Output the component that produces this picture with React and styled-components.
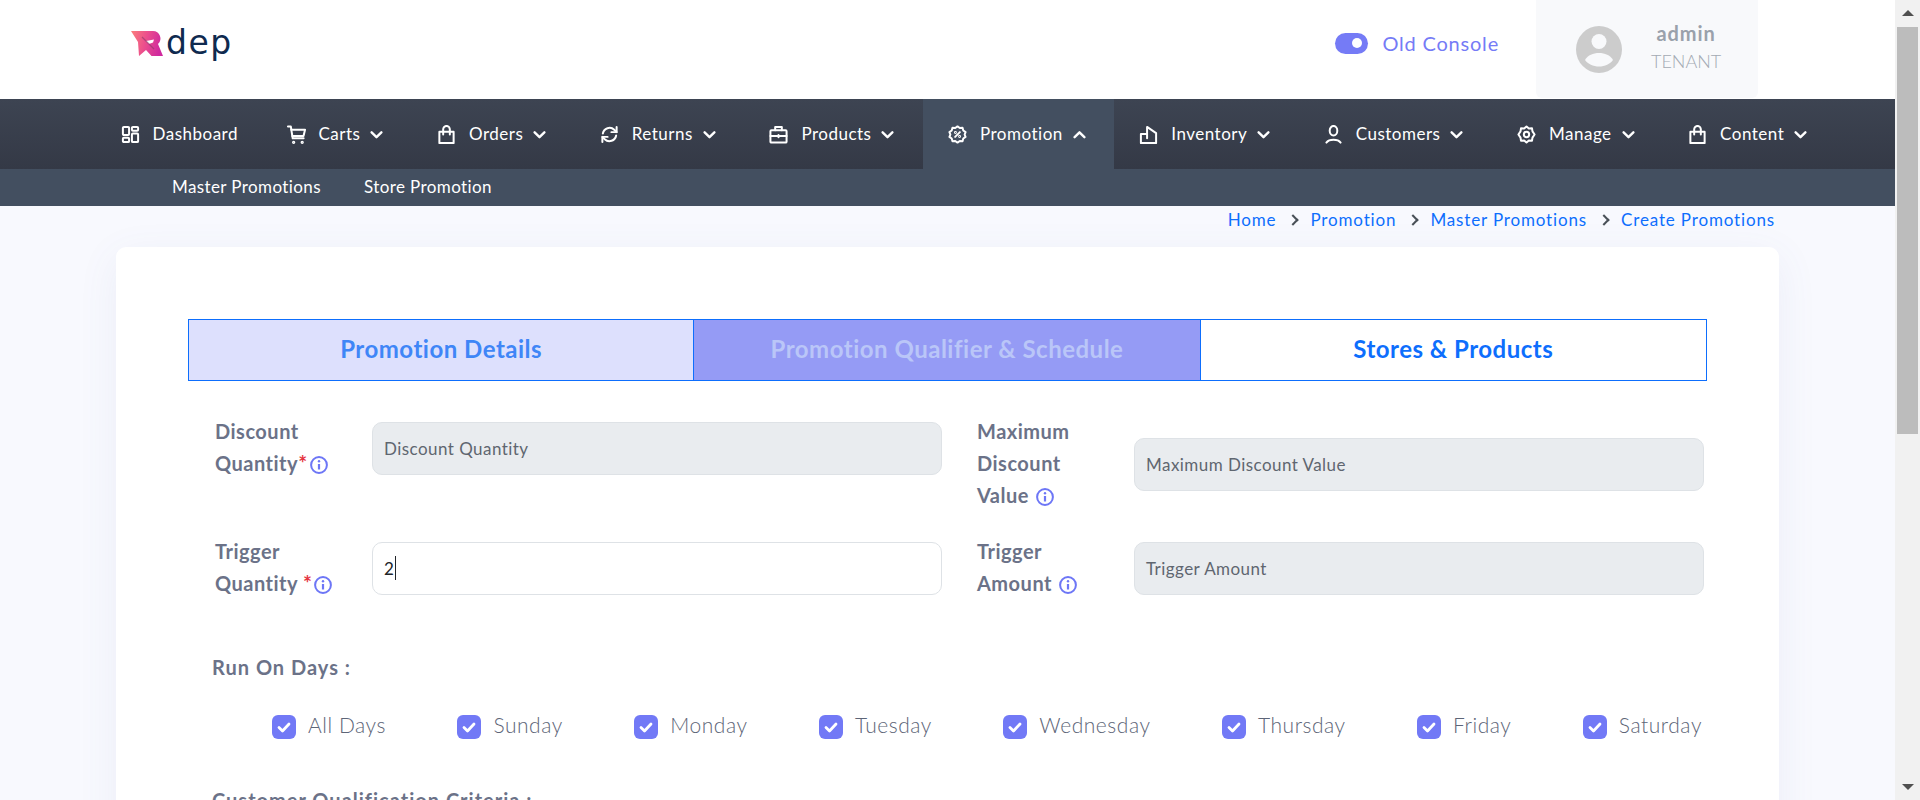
import React from 'react'
import styled, { createGlobalStyle } from 'styled-components'

const font = `Lato, "Noto Sans", sans-serif`

const Icon = ({ children }) => (
  <NavIcon viewBox="0 0 20 20" fill="none" stroke="currentColor" strokeWidth="2.1" strokeLinecap="round" strokeLinejoin="round">
    {children}
  </NavIcon>
)

const bag = (
  <>
    <path d="M2.500 7h15v12h-15z" />
    <path d="M6.500 10V4.500a3.500 3.500 0 0 1 7 0V10" />
  </>
)

const navItems = [
  {
    label: 'Dashboard',
    icon: (
      <>
        <rect x="2" y="2" width="6.500" height="8.500" rx="1" />
        <rect x="11.500" y="2" width="6.500" height="4" rx="1" />
        <rect x="2" y="13.500" width="6.500" height="4.500" rx="1" />
        <rect x="11.500" y="9" width="6.500" height="9" rx="1" />
      </>
    ),
    plain: true,
  },
  {
    label: 'Carts',
    icon: (
      <>
        <path d="M1 1.500h3l2 12.500h11.500" />
        <path d="M4.500 5H19l-1.600 6.500H5.600" />
        <circle cx="7" cy="18.200" r="0.700" />
        <circle cx="16" cy="18.200" r="0.700" />
      </>
    ),
  },
  { label: 'Orders', icon: bag },
  {
    label: 'Returns',
    icon: (
      <>
        <path d="M3 9a7.200 7.200 0 0 1 12-4l2.500 2.500" />
        <path d="M17.500 2v5.500H12" />
        <path d="M17 11a7.200 7.200 0 0 1-12 4l-2.500-2.500" />
        <path d="M2.500 18v-5.500H8" />
      </>
    ),
  },
  {
    label: 'Products',
    icon: (
      <>
        <rect x="1.500" y="5.500" width="17" height="13" rx="1" />
        <path d="M6.500 5.500V2h7v3.500" />
        <path d="M1.500 11.500h17" />
        <path d="M10 10.500v2.500" />
      </>
    ),
  },
  {
    label: 'Promotion',
    open: true,
    icon: (
      <>
        <path d="M10 1.500l2.400 1.700 2.900-.2.800 2.800 2.400 1.700-1 2.500 1 2.500-2.400 1.700-.8 2.800-2.900-.2-2.400 1.700-2.400-1.700-2.900.2-.8-2.800-2.400-1.700 1-2.500-1-2.500 2.400-1.700.8-2.800 2.900.2z" />
        <path d="M12.500 7.500l-5 5" />
        <circle cx="7.800" cy="7.800" r="0.500" />
        <circle cx="12.200" cy="12.200" r="0.500" />
      </>
    ),
  },
  {
    label: 'Inventory',
    icon: (
      <>
        <path d="M2 9.500h6.500V2L18 8.500V19H2z" />
        <path d="M8.500 9.500V14" />
      </>
    ),
  },
  {
    label: 'Customers',
    icon: (
      <>
        <ellipse cx="10" cy="6" rx="4" ry="5" />
        <path d="M2.500 18.500c1.500-2 4-3 7.500-3s6 1 7.500 3" />
      </>
    ),
  },
  {
    label: 'Manage',
    icon: (
      <>
        <path d="M10 1.500l2.500 2.200 3.300-.2.500 3.200L18.500 10l-2.200 3.300-.5 3.200-3.300-.2L10 18.500l-2.500-2.200-3.300.2-.5-3.200L1.500 10l2.200-3.300.5-3.200 3.300.2z" />
        <circle cx="10" cy="10" r="2.800" />
      </>
    ),
  },
  { label: 'Content', icon: bag },
]

const days = ['All Days', 'Sunday', 'Monday', 'Tuesday', 'Wednesday', 'Thursday', 'Friday', 'Saturday']

const Chevron = ({ up }) => (
  <ChevronIcon viewBox="0 0 12 12" fill="none" stroke="currentColor" strokeWidth="2.200" strokeLinecap="round" strokeLinejoin="round">
    <path d={up ? 'M1.500 8.500L6 4l4.500 4.500' : 'M1.500 4L6 8.500 10.500 4'} />
  </ChevronIcon>
)

const Info = () => (
  <InfoIcon viewBox="0 0 18 18" fill="none">
    <circle cx="9" cy="9" r="7.900" stroke="#6d76f6" strokeWidth="2" />
    <circle cx="9" cy="5.300" r="1.200" fill="#6d76f6" />
    <path d="M9 8v5.500" stroke="#6d76f6" strokeWidth="2.200" />
  </InfoIcon>
)

const Logo = () => (
  <LogoBox>
    <svg width="33" height="25" viewBox="0 0 33 25">
      <defs>
        <linearGradient id="logoGrad" x1="0" y1="0" x2="1" y2="0.200">
          <stop offset="0" stopColor="#fb7f7c" />
          <stop offset="0.500" stopColor="#ec4f8c" />
          <stop offset="1" stopColor="#d02a9e" />
        </linearGradient>
      </defs>
      <path d="M1 0H23a7.500 7.500 0 0 1 5 13L33 25H21.500L16 19 9 25 8 11z" fill="url(#logoGrad)" />
      <path d="M16 10l8-1.500-1 3-4 1.500z" fill="#fff" />
      <path d="M12 6l12 12" stroke="#8a3a6a" strokeWidth="1.200" opacity="0.600" />
    </svg>
    <LogoText>dep</LogoText>
  </LogoBox>
)

const Field = ({ label, required, filled, placeholder }) => (
  <FieldCol>
    <FieldLabel>
      {label}
      {required && <Star>*</Star>}
      <Info />
    </FieldLabel>
    {filled ? (
      <FilledInput>
        2<Caret />
      </FilledInput>
    ) : (
      <DisabledInput>{placeholder}</DisabledInput>
    )}
  </FieldCol>
)

const App = () => {
  return (
    <Page>
      <GlobalStyle />
      <Header>
        <Logo />
        <HeaderRight>
          <ToggleWrap>
            <Toggle />
            <ToggleLabel>Old Console</ToggleLabel>
          </ToggleWrap>
          <Profile>
            <Avatar viewBox="0 0 46 47">
              <ellipse cx="23" cy="23.500" rx="23" ry="23.500" fill="#cccccc" />
              <circle cx="23" cy="15.500" r="7.500" fill="#f8f9fb" />
              <path d="M9 34c3-5 8-7 14-7s11 2 14 7c-3 4-8 6.500-14 6.500S12 38 9 34z" fill="#f8f9fb" />
            </Avatar>
            <ProfileText>
              <ProfileName>admin</ProfileName>
              <ProfileRole>TENANT</ProfileRole>
            </ProfileText>
          </Profile>
        </HeaderRight>
      </Header>

      <Nav>
        {navItems.map((item) => (
          <NavItem key={item.label} $open={item.open}>
            <Icon>{item.icon}</Icon>
            <NavLabel>{item.label}</NavLabel>
            {!item.plain && <Chevron up={item.open} />}
          </NavItem>
        ))}
      </Nav>
      <SubNav>
        <SubLink>Master Promotions</SubLink>
        <SubLink>Store Promotion</SubLink>
      </SubNav>

      <Main>
        <Breadcrumb>
          <Crumb>Home</Crumb>
          <CrumbSep />
          <Crumb>Promotion</Crumb>
          <CrumbSep />
          <Crumb>Master Promotions</Crumb>
          <CrumbSep />
          <Crumb>Create Promotions</Crumb>
        </Breadcrumb>

        <Card>
          <Tabs>
            <Tab $state="done">Promotion Details</Tab>
            <Tab $state="current">Promotion Qualifier &amp; Schedule</Tab>
            <Tab>Stores &amp; Products</Tab>
          </Tabs>

          <FormGrid>
            <Field label={<>Discount<br />Quantity</>} required placeholder="Discount Quantity" />
            <Field label={<>Maximum<br />Discount<br />Value </>} placeholder="Maximum Discount Value" />
            <Field label={<>Trigger<br />Quantity </>} required filled />
            <Field label={<>Trigger<br />Amount </>} placeholder="Trigger Amount" />
          </FormGrid>

          <SectionTitle>Run On Days :</SectionTitle>
          <DaysRow>
            {days.map((day) => (
              <Day key={day}>
                <CheckBox viewBox="0 0 24 24">
                  <rect width="24" height="24" rx="6" fill="#7279f6" />
                  <path d="M7 12.500l3.500 3.500L17 9" fill="none" stroke="#fff" strokeWidth="2.800" strokeLinecap="round" strokeLinejoin="round" />
                </CheckBox>
                <DayText>{day}</DayText>
              </Day>
            ))}
          </DaysRow>
          <CriteriaTitle>Customer Qualification Criteria :</CriteriaTitle>
        </Card>
      </Main>

      <Scrollbar>
        <ScrollArrow />
        <ScrollThumb />
        <ScrollArrow $down />
      </Scrollbar>
    </Page>
  )
}

export default App

const GlobalStyle = createGlobalStyle`
  body {
    margin: 0;
    background: #f8f9fe;
    font-family: ${font};
  }
  * { box-sizing: border-box; }
`

const Page = styled.div`
  margin-right: 25px;
`
const Scrollbar = styled.div`
  position: fixed;
  top: 0;
  right: 0;
  bottom: 0;
  width: 25px;
  background: #f1f1f1;
  display: flex;
  flex-direction: column;
  justify-content: space-between;
  align-items: center;
  padding: 10px 0;
`
const ScrollArrow = styled.span`
  width: 0;
  height: 0;
  border-left: 6px solid transparent;
  border-right: 6px solid transparent;
  border-bottom: ${(p) => (p.$down ? '0' : '6px solid #505050')};
  border-top: ${(p) => (p.$down ? '6px solid #505050' : '0')};
`
const ScrollThumb = styled.span`
  position: absolute;
  top: 27px;
  left: 2px;
  width: 21px;
  height: 407px;
  background: #bcbcbc;
`
const Header = styled.header`
  height: 99px;
  background: #fff;
  display: flex;
  justify-content: space-between;
  padding: 0 137px 0 130px;
`
const LogoBox = styled.div`
  display: flex;
  align-items: flex-start;
  gap: 3px;
  padding-top: 31px;
`
const LogoText = styled.span`
  font-family: "DejaVu Sans", sans-serif;
  font-size: 33px;
  line-height: 33px;
  margin-top: -5px;
  color: #0f2a4f;
  letter-spacing: 1.5px;
`
const HeaderRight = styled.div`
  display: flex;
  align-items: flex-start;
  gap: 37px;
`
const ToggleWrap = styled.div`
  display: flex;
  align-items: center;
  gap: 14px;
  height: 86px;
`
const Toggle = styled.span`
  position: relative;
  width: 33px;
  height: 21px;
  border-radius: 11px;
  background: #757bf6;
  &::after {
    content: '';
    position: absolute;
    right: 6px;
    top: 5.500px;
    width: 10px;
    height: 10px;
    border-radius: 50%;
    background: #fff;
  }
`
const ToggleLabel = styled.span`
  font-size: 20px;
  letter-spacing: 0.8px;
  color: #757bf6;
`
const Profile = styled.div`
  width: 222px;
  height: 98px;
  background: #f8f9fb;
  border-radius: 0 0 6px 6px;
  display: flex;
  align-items: center;
  padding-left: 40px;
  gap: 29px;
`
const Avatar = styled.svg`
  width: 46px;
  height: 47px;
`
const ProfileText = styled.div`
  display: flex;
  flex-direction: column;
  align-items: center;
  gap: 5px;
  margin-bottom: 3px;
`
const ProfileName = styled.span`
  font-size: 20px;
  font-weight: 700;
  letter-spacing: 0.9px;
  color: #9aa1ab;
  line-height: 23px;
`
const ProfileRole = styled.span`
  font-size: 18px;
  font-weight: 300;
  color: #a3aab3;
  line-height: 23px;
`
const Nav = styled.nav`
  height: 70px;
  padding-left: 95.500px;
  display: flex;
  background: linear-gradient(#3d4452, #343946);
`
const NavItem = styled.div`
  height: 70px;
  padding: 0 23.500px 0 25px;
  display: flex;
  align-items: center;
  color: #fff;
  font-size: 17px;
  letter-spacing: 0.5px;
  background: ${(p) => (p.$open ? '#434f60' : 'transparent')};
`
const NavLabel = styled.span`
  margin: -1px 0 1px;
`
const NavIcon = styled.svg`
  width: 19px;
  height: 19px;
  margin-right: 13px;
  flex-shrink: 0;
`
const ChevronIcon = styled.svg`
  width: 13px;
  height: 13px;
  margin: 0 5px 0 10px;
`
const SubNav = styled.div`
  height: 37px;
  background: #434f60;
  padding-left: 172px;
  display: flex;
  align-items: center;
  gap: 43px;
`
const SubLink = styled.a`
  color: #fff;
  font-size: 17px;
  letter-spacing: 0.4px;
  margin: -1px 0 1px;
`
const Main = styled.main`
  padding: 0 116px 40px;
`
const Breadcrumb = styled.div`
  height: 41px;
  display: flex;
  align-items: flex-start;
  justify-content: flex-end;
  padding: 3px 4px 0 0;
  gap: 13px;
`
const Crumb = styled.a`
  color: #0d6efd;
  font-size: 17px;
  letter-spacing: 0.85px;
  line-height: 22px;
`
const CrumbSep = styled.span`
  width: 8px;
  height: 8px;
  margin-top: 7px;
  border-top: 2px solid #495057;
  border-right: 2px solid #495057;
  transform: rotate(45deg);
`
const Card = styled.section`
  background: #fff;
  border-radius: 10px;
  box-shadow: 0 10px 40px rgba(90, 100, 160, 0.08);
  padding: 72px 72px 0;
  min-height: 1165px;
`
const Tabs = styled.div`
  display: grid;
  grid-template-columns: repeat(3, 1fr);
  height: 62px;
`
const tabBg = { done: '#dde0fd', current: '#959bf5' }
const tabColor = { done: '#3f86f7', current: '#bac6f8' }
const Tab = styled.div`
  display: flex;
  align-items: center;
  justify-content: center;
  padding-bottom: 3px;
  border: 1px solid #0d6efd;
  & + & {
    border-left: 0;
  }
  background: ${(p) => tabBg[p.$state] || '#fff'};
  color: ${(p) => tabColor[p.$state] || '#0d6efd'};
  font-size: 24px;
  letter-spacing: 0.5px;
  font-weight: 700;
`
const FormGrid = styled.div`
  display: grid;
  grid-template-columns: 762px 727px;
  align-items: start;
  row-gap: 24px;
  margin-top: 35px;
  padding-left: 27px;
`
const FieldCol = styled.div`
  display: flex;
  align-items: center;
`
const FieldLabel = styled.div`
  width: 157px;
  flex-shrink: 0;
  margin: -1px 0 1px;
  font-size: 20px;
  letter-spacing: 0.5px;
  font-weight: 700;
  line-height: 32px;
  color: #6b7288;
`
const Star = styled.span`
  color: #e5343f;
  font-size: 21px;
  line-height: 0;
`
const InfoIcon = styled.svg`
  width: 18px;
  height: 18px;
  margin-left: 2px;
  vertical-align: -3px;
`
const inputBase = `
  width: 570px;
  height: 53px;
  border-radius: 10px;
  border: 1px solid #dee2e6;
  display: flex;
  align-items: center;
  padding: 0 11px;
  font-size: 17px;
  letter-spacing: 0.45px;
`
const DisabledInput = styled.div`
  ${inputBase}
  background: #e9ecef;
  color: #5f6670;
`
const FilledInput = styled.div`
  ${inputBase}
  background: #fff;
  color: #212529;
`
const Caret = styled.span`
  width: 1px;
  height: 24px;
  background: #212529;
  margin-left: 1px;
`
const SectionTitle = styled.h3`
  margin: 55px 0 0 24px;
  font-size: 20px;
  letter-spacing: 1px;
  line-height: 24px;
  font-weight: 700;
  color: #6b7288;
`
const DaysRow = styled.div`
  display: flex;
  justify-content: space-between;
  margin: 35px 5px 0 84px;
`
const Day = styled.label`
  display: flex;
  align-items: center;
  gap: 12px;
  font-size: 21px;
  letter-spacing: 0.55px;
  font-weight: 300;
  color: #5d6577;
`
const DayText = styled.span`
  margin: -2px 0 2px;
`
const CheckBox = styled.svg`
  width: 24px;
  height: 24px;
`
const CriteriaTitle = styled(SectionTitle)`
  margin-top: 49px;
`
